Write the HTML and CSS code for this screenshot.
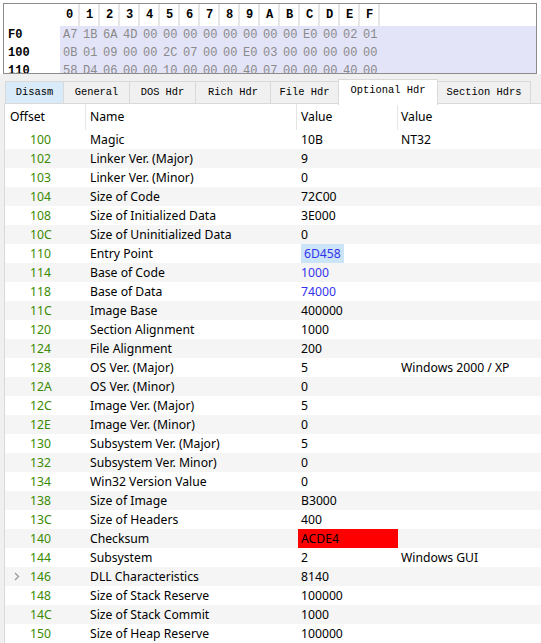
FILE: index.html
```html
<!DOCTYPE html>
<html>
<head>
<meta charset="utf-8">
<link rel="stylesheet" href="styles.css">
</head>
<body>
<div class="top">
  <div class="hex">
    <div class="hrow head">
      <div class="lbl"></div>
      <div class="cells">
        <span>0</span><span>1</span><span>2</span><span>3</span><span>4</span><span>5</span><span>6</span><span>7</span><span>8</span><span>9</span><span>A</span><span>B</span><span>C</span><span>D</span><span>E</span><span>F</span>
      </div>
    </div>
    <div class="hrow">
      <div class="lbl">F0</div>
      <div class="cells data">
        <span>A7</span><span>1B</span><span>6A</span><span>4D</span><span>00</span><span>00</span><span>00</span><span>00</span><span>00</span><span>00</span><span>00</span><span>00</span><span>E0</span><span>00</span><span>02</span><span>01</span>
      </div>
    </div>
    <div class="hrow">
      <div class="lbl">100</div>
      <div class="cells data">
        <span>0B</span><span>01</span><span>09</span><span>00</span><span>00</span><span>2C</span><span>07</span><span>00</span><span>00</span><span>E0</span><span>03</span><span>00</span><span>00</span><span>00</span><span>00</span><span>00</span>
      </div>
    </div>
    <div class="hrow">
      <div class="lbl">110</div>
      <div class="cells data">
        <span>58</span><span>D4</span><span>06</span><span>00</span><span>00</span><span>10</span><span>00</span><span>00</span><span>00</span><span>40</span><span>07</span><span>00</span><span>00</span><span>00</span><span>40</span><span>00</span>
      </div>
    </div>
  </div>
</div>
<div class="lower">
  <div class="tabs">
    <div class="tab hover w1">Disasm</div>
    <div class="tab w2">General</div>
    <div class="tab w3">DOS Hdr</div>
    <div class="tab w4">Rich Hdr</div>
    <div class="tab w5">File Hdr</div>
    <div class="tab sel w6">Optional Hdr</div>
    <div class="tab w7">Section Hdrs</div>
  </div>
  <div class="panel">
    <div class="thead">
      <div class="c1">Offset</div>
      <div class="c2">Name</div>
      <div class="c3">Value</div>
      <div class="c4">Value</div>
    </div>
    <div class="tbody">
      <div class="tr"><div class="c1">100</div><div class="c2">Magic</div><div class="c3">10B</div><div class="c4">NT32</div></div>
      <div class="tr"><div class="c1">102</div><div class="c2">Linker Ver. (Major)</div><div class="c3">9</div><div class="c4"></div></div>
      <div class="tr"><div class="c1">103</div><div class="c2">Linker Ver. (Minor)</div><div class="c3">0</div><div class="c4"></div></div>
      <div class="tr"><div class="c1">104</div><div class="c2">Size of Code</div><div class="c3">72C00</div><div class="c4"></div></div>
      <div class="tr"><div class="c1">108</div><div class="c2">Size of Initialized Data</div><div class="c3">3E000</div><div class="c4"></div></div>
      <div class="tr"><div class="c1">10C</div><div class="c2">Size of Uninitialized Data</div><div class="c3">0</div><div class="c4"></div></div>
      <div class="tr"><div class="c1">110</div><div class="c2">Entry Point</div><div class="c3"><span class="pick blue">6D458</span></div><div class="c4"></div></div>
      <div class="tr"><div class="c1">114</div><div class="c2">Base of Code</div><div class="c3 blue">1000</div><div class="c4"></div></div>
      <div class="tr"><div class="c1">118</div><div class="c2">Base of Data</div><div class="c3 blue">74000</div><div class="c4"></div></div>
      <div class="tr"><div class="c1">11C</div><div class="c2">Image Base</div><div class="c3">400000</div><div class="c4"></div></div>
      <div class="tr"><div class="c1">120</div><div class="c2">Section Alignment</div><div class="c3">1000</div><div class="c4"></div></div>
      <div class="tr"><div class="c1">124</div><div class="c2">File Alignment</div><div class="c3">200</div><div class="c4"></div></div>
      <div class="tr"><div class="c1">128</div><div class="c2">OS Ver. (Major)</div><div class="c3">5</div><div class="c4">Windows 2000 / XP</div></div>
      <div class="tr"><div class="c1">12A</div><div class="c2">OS Ver. (Minor)</div><div class="c3">0</div><div class="c4"></div></div>
      <div class="tr"><div class="c1">12C</div><div class="c2">Image Ver. (Major)</div><div class="c3">5</div><div class="c4"></div></div>
      <div class="tr"><div class="c1">12E</div><div class="c2">Image Ver. (Minor)</div><div class="c3">0</div><div class="c4"></div></div>
      <div class="tr"><div class="c1">130</div><div class="c2">Subsystem Ver. (Major)</div><div class="c3">5</div><div class="c4"></div></div>
      <div class="tr"><div class="c1">132</div><div class="c2">Subsystem Ver. Minor)</div><div class="c3">0</div><div class="c4"></div></div>
      <div class="tr"><div class="c1">134</div><div class="c2">Win32 Version Value</div><div class="c3">0</div><div class="c4"></div></div>
      <div class="tr"><div class="c1">138</div><div class="c2">Size of Image</div><div class="c3">B3000</div><div class="c4"></div></div>
      <div class="tr"><div class="c1">13C</div><div class="c2">Size of Headers</div><div class="c3">400</div><div class="c4"></div></div>
      <div class="tr"><div class="c1">140</div><div class="c2">Checksum</div><div class="c3 bad">ACDE4</div><div class="c4"></div></div>
      <div class="tr"><div class="c1">144</div><div class="c2">Subsystem</div><div class="c3">2</div><div class="c4">Windows GUI</div></div>
      <div class="tr"><div class="c1 exp"><svg class="chev" width="6" height="9" viewBox="0 0 6 9"><path d="M1 1 L4.5 4.5 L1 8" fill="none" stroke="#9a9a9a" stroke-width="1.3"/></svg>146</div><div class="c2">DLL Characteristics</div><div class="c3">8140</div><div class="c4"></div></div>
      <div class="tr"><div class="c1">148</div><div class="c2">Size of Stack Reserve</div><div class="c3">100000</div><div class="c4"></div></div>
      <div class="tr"><div class="c1">14C</div><div class="c2">Size of Stack Commit</div><div class="c3">1000</div><div class="c4"></div></div>
      <div class="tr"><div class="c1">150</div><div class="c2">Size of Heap Reserve</div><div class="c3">100000</div><div class="c4"></div></div>
    </div>
  </div>
</div>
</body>
</html>
```

FILE: styles.css
```css
html, body {
  margin: 0;
  padding: 0;
  background: #ffffff;
  width: 541px;
  height: 643px;
  overflow: hidden;
}

.top {
  padding: 3px 4px 0 3px;
  background: #ffffff;
}

.hex {
  border: 1px solid #8c8c8c;
  height: 69px;
  overflow: hidden;
  font-family: "Liberation Mono", monospace;
  font-size: 12px;
}

.hrow {
  display: flex;
  height: 18px;
  line-height: 18px;
}

.hrow.head {
  height: 22px;
  line-height: 22px;
}

.lbl {
  width: 52px;
  padding-left: 4px;
  font-weight: bold;
  color: #000;
  background: #fff;
}

.cells {
  flex: 1;
  display: flex;
}

.cells span {
  width: 20px;
  box-sizing: border-box;
}

.head .cells span {
  text-align: center;
  font-weight: bold;
  color: #000;
  border-right: 2px solid #e6e6e6;
  padding-left: 1px;
}

.cells.data {
  background: #e4e4f8;
  color: #8a8a8a;
}

.cells.data span {
  padding-left: 3px;
}

.lower {
  background: #f0f0f0;
  padding-top: 7px;
}

.tabs {
  display: flex;
  height: 22px;
  padding-left: 5px;
  align-items: flex-end;
  position: relative;
  z-index: 1;
  font-family: "Liberation Mono", monospace;
  font-size: 10.4px;
  color: #000;
}

.tab {
  height: 22px;
  line-height: 21px;
  box-sizing: border-box;
  border: 1px solid #d9d9d9;
  border-bottom: none;
  margin-right: -1px;
  text-align: center;
  background: #f0f0f0;
  margin-bottom: 0;
}

.tab.hover {
  background: #d9eaf9;
}

.tab.sel {
  height: 26px;
  line-height: 21px;
  background: #ffffff;
  margin-bottom: -2px;
  padding-bottom: 3px;
}

.w1 { width: 59px; }
.w2 { width: 67px; }
.w3 { width: 67px; }
.w4 { width: 76px; }
.w5 { width: 69px; }
.w6 { width: 100px; }
.w7 { width: 94px; }

.panel {
  margin-left: 4px;
  border: 1px solid #d9d9d9;
  border-right: none;
  background: #fff;
  height: 540px;
  font-family: "Noto Sans", sans-serif;
  font-size: 12.2px;
  color: #000;
}

.thead {
  display: flex;
  height: 26px;
  line-height: 26px;
}

.thead > div {
  border-right: 1px solid #e5e5e5;
  box-sizing: border-box;
}

.c1 { width: 81px; padding-left: 5px; box-sizing: border-box; flex: none; }
.c2 { width: 211px; padding-left: 4px; box-sizing: border-box; flex: none; }
.c3 { width: 101px; padding-left: 4px; box-sizing: border-box; flex: none; }
.c4 { flex: 1; padding-left: 3px; }

.thead .c4 { border-right: none; }

.tr {
  display: flex;
  height: 19px;
  line-height: 19px;
}

.tr:nth-child(even) {
  background: #f5f5f5;
}

.tr .c1 {
  padding-left: 25px;
  color: #3a8a00;
  position: relative;
}

.chev {
  position: absolute;
  left: 9px;
  top: 5px;
}

.tr .c3 {
  padding-left: 1px;
  text-indent: 3px;
}

.pick {
  display: inline-block;
  background: #cce4f7;
  text-indent: 0;
  padding: 0 3px;
}

.blue { color: #3333ee; }

.tr .c3.bad {
  background: #ff0000;
  color: #000;
  margin-left: 1px;
  padding-left: 0;
  width: 100px;
}
```
